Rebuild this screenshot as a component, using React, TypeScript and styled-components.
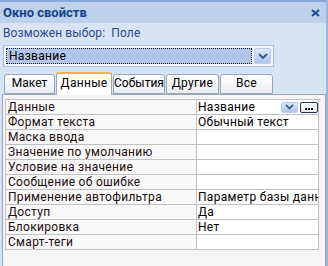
import React from 'react';
import styled, { createGlobalStyle } from 'styled-components';

const GlobalStyle = createGlobalStyle`
  body {
    margin: 0;
    background: #d6e4f5;
    font-family: Roboto, "Noto Sans", sans-serif;
  }
`;

const Window = styled.div`
  width: 326px;
  height: 264px;
  background: #d6e4f5;
  border-top: 2px solid #8aa8d6;
  border-right: 2px solid #9bb5dd;
  overflow: hidden;
  font-size: 12px;
  letter-spacing: 0.3px;
`;

const TitleBar = styled.div`
  height: 21px;
  background: #bdd1eb;
  display: flex;
  align-items: center;
  justify-content: space-between;
  padding: 0 6px 0 3px;
`;

const Title = styled.div`
  font-weight: bold;
  font-size: 13px;
  letter-spacing: 0;
  color: #15428b;
`;

const SelectionInfo = styled.div`
  padding: 3px 3px 0;
  height: 15px;
  line-height: 15px;
  color: #2b4a86;
  white-space: pre;
  letter-spacing: 0.1px;
`;

const Combo = styled.div`
  margin: 4px 0 0 3px;
  width: 265px;
  height: 16px;
  padding: 2px;
  border: 1px solid #a7bddd;
  background: #f4f8fd;
  display: flex;
  gap: 2px;
`;

const ComboField = styled.div`
  flex: 1;
  background: #b2c6ea;
  border: 1px dotted #222;
  line-height: 14px;
  padding-left: 2px;
  color: #000;
`;

const DropButton = styled.div<{ $w: number; $h: number }>`
  width: ${(p) => p.$w}px;
  height: ${(p) => p.$h}px;
  box-sizing: border-box;
  border: 1px solid #b9cdef;
  border-radius: 2px;
  background: linear-gradient(#dfe9fb, #abc5f0);
  display: flex;
  align-items: center;
  justify-content: center;
  flex-shrink: 0;
`;

const TabRow = styled.div`
  margin-top: 5px;
  padding-left: 4px;
  display: flex;
  align-items: flex-end;
  gap: 1px;
  height: 22px;
`;

const Tab = styled.div<{ $w: number; $active?: boolean }>`
  width: ${(p) => p.$w}px;
  box-sizing: border-box;
  height: ${(p) => (p.$active ? 23 : 20)}px;
  margin-bottom: ${(p) => (p.$active ? -1 : 0)}px;
  border: 1px solid #9aa6b6;
  border-bottom: ${(p) => (p.$active ? 'none' : '1px solid #9aa6b6')};
  border-top: ${(p) => (p.$active ? '2px solid #f2b33d' : '1px solid #9aa6b6')};
  border-radius: 3px 3px 0 0;
  background: ${(p) => (p.$active ? '#fff' : 'linear-gradient(#ffffff, #e9ecef)')};
  text-align: center;
  line-height: ${(p) => (p.$active ? 18 : 17)}px;
  color: #000;
  white-space: nowrap;
  letter-spacing: ${(p) => (p.$w < 53 ? 0 : 0.3)}px;
  position: relative;
  z-index: ${(p) => (p.$active ? 2 : 1)};
`;

const Panel = styled.div`
  margin-left: 2px;
  width: 319px;
  height: 169px;
  border: 1px solid #9aa6b6;
  border-bottom: none;
  background: #f5f5f5;
  padding: 4px 1px 0 2px;
  position: relative;
  z-index: 1;
`;

const Grid = styled.div`
  display: grid;
  grid-template-columns: 191px 122px;
  border-top: 1px solid #c2c2c2;
  border-left: 1px solid #c2c2c2;
  width: 315px;
`;

const Cell = styled.div<{ $label?: boolean }>`
  height: 14px;
  line-height: 14px;
  border-right: 1px solid #c2c2c2;
  border-bottom: 1px solid #c2c2c2;
  background: ${(p) => (p.$label ? '#f9f9f9' : '#fff')};
  color: ${(p) => (p.$label ? '#1c0c0c' : '#000')};
  padding-left: ${(p) => (p.$label ? 2 : 1)}px;
  white-space: nowrap;
  overflow: hidden;
  display: flex;
  align-items: center;
`;

const CellText = styled.span`
  flex: 1;
  min-width: 0;
  overflow: hidden;
`;

const DotsButton = styled.div`
  width: 18px;
  height: 11px;
  box-sizing: border-box;
  border: 1px solid #22324d;
  border-radius: 2px;
  background: linear-gradient(#ffffff, #e4e8ee);
  margin: 0 0 0 2px;
  flex-shrink: 0;
  display: flex;
  align-items: center;
  justify-content: center;
  gap: 1px;
`;

const Dot = styled.span`
  width: 2px;
  height: 2px;
  margin-top: 3px;
  background: #000;
`;

const Chevron: React.FC<{ size: number }> = ({ size }) => (
  <svg width={size} height={size * 0.6} viewBox="0 0 10 6">
    <path d="M1 1 L5 5 L9 1" fill="none" stroke="#3f5d8c" strokeWidth="2" />
  </svg>
);

const rows: [string, string][] = [
  ['Данные', 'Название'],
  ['Формат текста', 'Обычный текст'],
  ['Маска ввода', ''],
  ['Значение по умолчанию', ''],
  ['Условие на значение', ''],
  ['Сообщение об ошибке', ''],
  ['Применение автофильтра', 'Параметр базы данных'],
  ['Доступ', 'Да'],
  ['Блокировка', 'Нет'],
  ['Смарт-теги', ''],
];

const tabs: [string, number][] = [
  ['Макет', 51],
  ['Данные', 56],
  ['События', 52],
  ['Другие', 53],
  ['Все', 53],
];

const App: React.FC = () => {
  return (
    <Window>
      <GlobalStyle />
      <TitleBar>
        <Title>Окно свойств</Title>
        <svg width="9" height="8" viewBox="0 0 9 8">
          <path d="M1 1 L8 7 M8 1 L1 7" stroke="#1c4a96" strokeWidth="2" />
        </svg>
      </TitleBar>
      <SelectionInfo>{'Возможен выбор:  Поле'}</SelectionInfo>
      <Combo>
        <ComboField>Название</ComboField>
        <DropButton $w={17} $h={16}>
          <Chevron size={10} />
        </DropButton>
      </Combo>
      <TabRow>
        {tabs.map(([name, w]) => (
          <Tab key={name} $w={w} $active={name === 'Данные'}>
            {name}
          </Tab>
        ))}
      </TabRow>
      <Panel>
        <Grid>
          {rows.map(([label, value], i) => (
            <React.Fragment key={label}>
              <Cell $label>{label}</Cell>
              <Cell>
                <CellText>{value}</CellText>
                {i === 0 && (
                  <>
                    <DropButton $w={17} $h={11}>
                      <Chevron size={9} />
                    </DropButton>
                    <DotsButton>
                      <Dot />
                      <Dot />
                      <Dot />
                    </DotsButton>
                  </>
                )}
              </Cell>
            </React.Fragment>
          ))}
        </Grid>
      </Panel>
    </Window>
  );
};

export default App;
